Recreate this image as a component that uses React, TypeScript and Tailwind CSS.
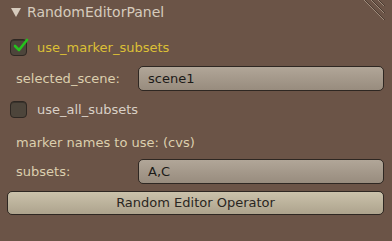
import React from "react";

function Check({ checked }: { checked: boolean }) {
  return (
    <div className="relative w-[17px] h-[17px] rounded-[4px] border border-[#2e2722] bg-[#4d453b] shadow-[inset_0_1px_0_rgba(0,0,0,0.25)]">
      {checked && (
        <svg className="absolute left-[2px] top-[-3px]" width="16" height="16" viewBox="0 0 16 16">
          <path d="M2 9 L6 13 L14 3" fill="none" stroke="#25c21d" strokeWidth="2.6" strokeLinecap="round" strokeLinejoin="round" />
        </svg>
      )}
    </div>
  );
}

function Field({ value }: { value: string }) {
  return (
    <div className="flex-1 h-[25px] flex items-center pl-[9px] rounded-[5px] border border-[#2e2722] bg-gradient-to-b from-[#b1a698] to-[#988c7e] text-[#1c1a18]">
      {value}
    </div>
  );
}

export default function App() {
  return (
    <div
      className="relative w-[392px] h-[241px] bg-[#6b5447] text-[13px] overflow-hidden"
      style={{ fontFamily: '"DejaVu Sans", sans-serif' }}
    >
      {/* grip corner */}
      <svg className="absolute right-[6px] top-0" width="22" height="22" viewBox="0 0 22 22">
        <path d="M0 0 L20 20 M7 0 L20 13 M14 0 L20 6" stroke="#a08c7c" strokeWidth="1" />
        <path d="M1 0 L21 20 M8 0 L21 13 M15 0 L21 6" stroke="#4a3a30" strokeWidth="1" />
      </svg>

      {/* header */}
      <div className="flex items-center h-[23px] pl-[11px] pt-[1px] gap-[6px]">
        <svg width="10" height="10" viewBox="0 0 10 10">
          <path d="M0 1 L10 1 L5 10 Z" fill="#d6cbbd" />
        </svg>
        <span className="text-[14px] text-[#d6cbbd]">RandomEditorPanel</span>
      </div>

      <div className="flex flex-col pl-[10px] pr-[8px]">
        <div className="flex items-center gap-[10px] h-[25px] mt-[12px]">
          <Check checked />
          <span className="text-[#dcc036]">use_marker_subsets</span>
        </div>

        <div className="flex items-center mt-[6px] h-[25px]">
          <span className="w-[128px] pl-[6px] text-[#dccfae]">selected_scene:</span>
          <Field value="scene1" />
        </div>

        <div className="flex items-center gap-[10px] h-[25px] mt-[6px]">
          <Check checked={false} />
          <span className="text-[#d9d0c6]">use_all_subsets</span>
        </div>

        <div className="flex items-center h-[25px] mt-[8px] pl-[6px] text-[#dccfae]">
          marker names to use: (cvs)
        </div>

        <div className="flex items-center mt-[4px] h-[25px]">
          <span className="w-[128px] pl-[6px] text-[#dccfae]">subsets:</span>
          <Field value="A,C" />
        </div>

        <div className="-ml-[3px] mt-[7px] h-[24px] flex items-center justify-center rounded-[5px] border border-[#2e2722] bg-gradient-to-b from-[#cbc2ab] to-[#ada38d] text-[#2a2622]">
          Random Editor Operator
        </div>
      </div>
    </div>
  );
}
